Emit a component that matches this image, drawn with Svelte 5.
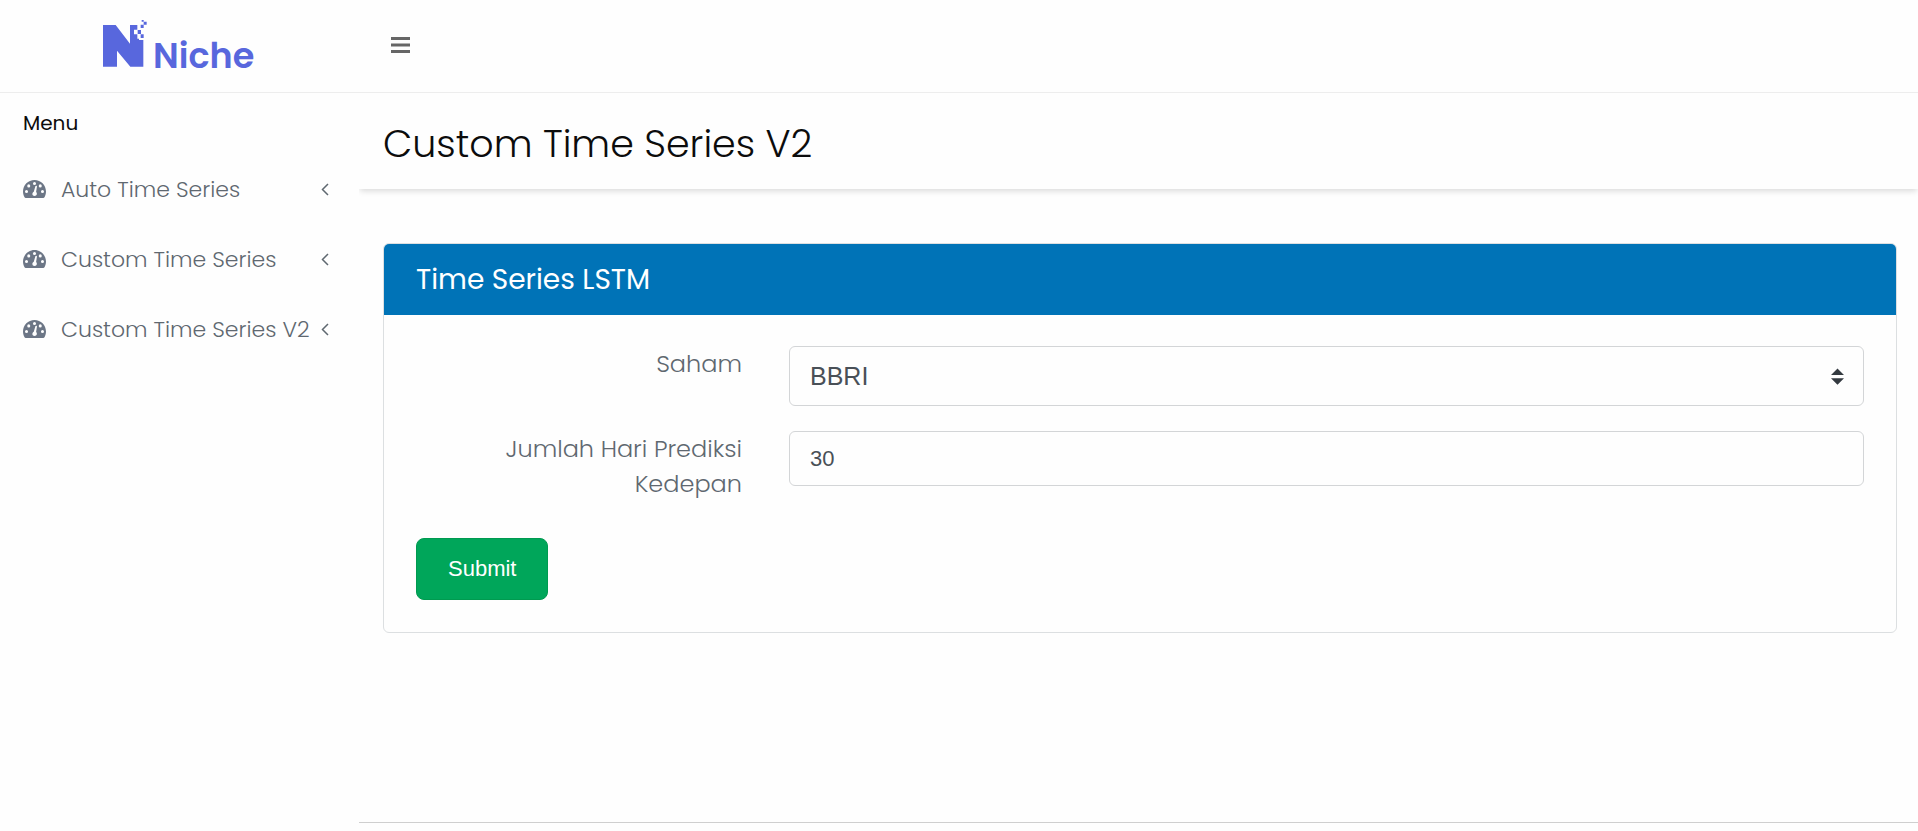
<script lang="ts">
	const menu = ['Auto Time Series', 'Custom Time Series', 'Custom Time Series V2'];

	let saham = $state('BBRI');
	let days = $state('30');
	let collapsed = $state(false);
</script>

<div class="page">
	<header class="topbar">
		<a class="brand" href="#home">
			<svg class="brand-mark" viewBox="0 0 132 144" aria-hidden="true">
				<path d="M0 15H38L81 71V15H103V29H93V43H103V56H108V60H121V140H82L42 92V140H0Z" />
				<path d="M104 30h10v12h-10zM113 43h9v11h-9zM113 14h9v10h-9zM122 5h9v9h-9zM116 0h6v5h-6z" />
			</svg>
			<span class="brand-name">Niche</span>
		</a>
		<button class="toggle" type="button" aria-label="Toggle menu" onclick={() => (collapsed = !collapsed)}>
			<svg viewBox="0 0 20 16" aria-hidden="true">
				<path d="M0 0h19v3H0zM0 6.500h19v3H0zM0 13h19v3H0z" />
			</svg>
		</button>
	</header>

	<div class="layout">
		{#if !collapsed}
			<nav class="sidebar">
				<p class="menu-title">Menu</p>
				<ul>
					{#each menu as item}
						<li>
							<a href="#menu">
								<svg class="gauge" viewBox="0 32 576 448" aria-hidden="true">
									<path
										fill-rule="evenodd"
										d="M288 32C129 32 0 161 0 320c0 53 14 102 39 145 6 10 16 15 27 15h443c12 0 22-5 28-15 25-43 39-92 39-145C576 161 447 32 288 32zM288 80a38 38 0 1 1 0 76 38 38 0 0 1 0-76zM144 140a38 38 0 1 1 0 76 38 38 0 0 1 0-76zM432 140a38 38 0 1 1 0 76 38 38 0 0 1 0-76zM88 282a38 38 0 1 1 0 76 38 38 0 0 1 0-76zM488 282a38 38 0 1 1 0 76 38 38 0 0 1 0-76zM310 190c4-22 44-16 40 6l-22 136c34 28 24 100-38 100s-76-74-20-106z"
									/>
								</svg>
								<span>{item}</span>
								<svg class="arrow" viewBox="0 0 8 13" aria-hidden="true">
									<path d="M7 1 1.500 6.500 7 12" />
								</svg>
							</a>
						</li>
					{/each}
				</ul>
			</nav>
		{/if}

		<div class="content">
			<h1>Custom Time Series V2</h1>

			<main>
				<section class="card">
					<h2>Time Series LSTM</h2>
					<form onsubmit={(e) => e.preventDefault()}>
						<div class="row">
							<label for="saham">Saham</label>
							<div class="select">
								<select id="saham" bind:value={saham}>
									<option>BBRI</option>
								</select>
								<svg viewBox="0 0 4 5" aria-hidden="true">
									<path d="M2 0 0 2h4zM2 5 0 3h4z" />
								</svg>
							</div>
						</div>
						<div class="row">
							<label for="days">Jumlah Hari Prediksi Kedepan</label>
							<input id="days" type="text" bind:value={days} />
						</div>
						<button class="submit" type="submit">Submit</button>
					</form>
				</section>
			</main>

			<footer></footer>
		</div>
	</div>
</div>

<style>
	:global(body) {
		background: #fefefe;
	}

	.page {
		display: flex;
		flex-direction: column;
		min-height: 100vh;
		font-family: Poppins, Inter, sans-serif;
		font-weight: 300;
		color: #0c0c0c;
	}

	.page * {
		box-sizing: border-box;
	}

	.topbar {
		display: flex;
		height: 93px;
		border-bottom: 1px solid #ededed;
	}

	.brand {
		display: flex;
		align-items: flex-start;
		gap: 6px;
		width: 359px;
		padding: 20px 0 0 103px;
		color: #5867dd;
		text-decoration: none;
	}

	.brand-mark {
		width: 44px;
		height: 48px;
		fill: currentColor;
	}

	.brand-name {
		padding-top: 18px;
		font-size: 35px;
		line-height: 36px;
		font-weight: 600;
	}

	.toggle {
		display: flex;
		align-items: center;
		padding: 0 32px;
		height: 90px;
		border: 0;
		background: none;
		cursor: pointer;
	}

	.toggle svg {
		width: 20px;
		height: 16px;
		fill: #666;
	}

	.layout {
		display: flex;
		flex: 1;
	}

	.sidebar {
		width: 359px;
		flex-shrink: 0;
		padding: 12px 24px 12px 23px;
	}

	.menu-title {
		margin: 0;
		font-size: 20px;
		line-height: 36px;
		font-weight: 400;
	}

	ul {
		list-style: none;
		margin: 13px 0 0;
		padding: 0;
	}

	li a {
		display: flex;
		align-items: center;
		height: 70px;
		padding-right: 6px;
		font-size: 22px;
		white-space: nowrap;
		color: #5f6870;
		text-decoration: none;
	}

	.gauge {
		width: 23px;
		height: 18px;
		margin-right: 15px;
		fill: #6c7686;
	}

	.arrow {
		width: 8px;
		height: 13px;
		margin-left: auto;
		fill: none;
		stroke: currentColor;
		stroke-width: 1.5;
	}

	.content {
		display: flex;
		flex-direction: column;
		flex: 1;
		min-width: 0;
	}

	h1 {
		margin: 0;
		padding: 27px 24px 21px;
		font-size: 38px;
		line-height: 48px;
		font-weight: 300;
		box-shadow: 0 3px 6px -1px rgba(0, 0, 0, 0.15);
		clip-path: inset(0 0 -8px 0);
	}

	main {
		flex: 1;
		padding: 54px 21px 54px 24px;
	}

	.card {
		border: 1px solid #dcdfe1;
		border-radius: 6px;
		overflow: hidden;
	}

	h2 {
		margin: 0;
		padding: 18px 32px;
		background: #0073b7;
		color: #fff;
		font-size: 28px;
		line-height: 35px;
		font-weight: 400;
	}

	form {
		padding: 31px 32px 32px;
	}

	.row {
		display: grid;
		grid-template-columns: 326px 1fr;
		align-items: start;
		column-gap: 47px;
		margin-bottom: 25px;
	}

	label {
		padding-left: 80px;
		font-size: 24px;
		line-height: 35px;
		text-align: right;
		color: #5f6870;
	}

	.select {
		position: relative;
	}

	select,
	input {
		display: block;
		width: 100%;
		padding: 0 20px;
		border: 1px solid #d3d5d7;
		border-radius: 6px;
		background: #fefefe;
		color: #495057;
		font-family: 'Liberation Sans', Arial, sans-serif;
	}

	select {
		height: 60px;
		appearance: none;
		font-size: 25px;
	}

	input {
		height: 55px;
		font-size: 22px;
	}

	.select svg {
		position: absolute;
		top: 22px;
		right: 20px;
		width: 13px;
		height: 17px;
		fill: #343a40;
		pointer-events: none;
	}

	.submit {
		display: block;
		margin-top: 37px;
		padding: 0 31px;
		height: 62px;
		border: 1px solid #009a50;
		border-radius: 8px;
		background: #00a65a;
		color: #fff;
		font-family: 'Liberation Sans', Arial, sans-serif;
		font-size: 22px;
		cursor: pointer;
	}

	footer {
		height: 9px;
		border-top: 1px solid #cfcfcf;
	}
</style>
